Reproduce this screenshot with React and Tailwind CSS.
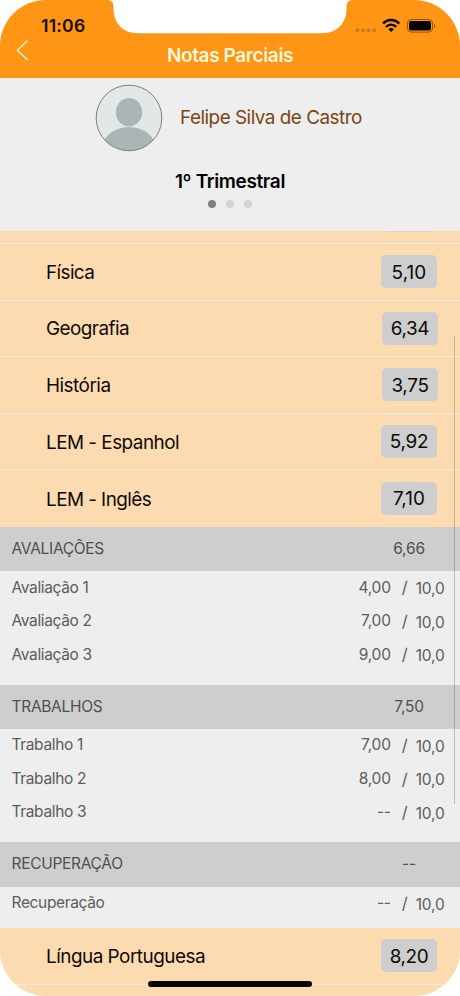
import React from 'react'

const subjects = [
  { name: "Física", grade: "5,10", nameClass: "tracking-[-0.6px]", gradeClass: "mr-[23px] tracking-[0.1px]" },
  { name: "Geografia", grade: "6,34", nameClass: "tracking-[-0.55px]", gradeClass: "mr-[22px] tracking-[-0.4px]" },
  { name: "História", grade: "3,75", nameClass: "tracking-[-0.5px]", gradeClass: "mr-[22px] tracking-[-0.3px]" },
  { name: "LEM - Espanhol", grade: "5,92", nameClass: "tracking-[-0.52px]", gradeClass: "mr-[23px] tracking-[-0.3px]" },
  { name: "LEM - Inglês", grade: "7,10", nameClass: "tracking-[-0.55px]", gradeClass: "mr-[23px] tracking-[0.1px]", last: true },
]

const groups = [
  {
    title: "AVALIAÇÕES",
    total: "6,66",
    height: "h-[113.5px]",
    items: [
      { name: "Avaliação 1", grade: "4,00" },
      { name: "Avaliação 2", grade: "7,00" },
      { name: "Avaliação 3", grade: "9,00" },
    ],
  },
  {
    title: "TRABALHOS",
    total: "7,50",
    height: "h-[113.5px]",
    items: [
      { name: "Trabalho 1", grade: "7,00" },
      { name: "Trabalho 2", grade: "8,00" },
      { name: "Trabalho 3", grade: "--" },
    ],
  },
  {
    title: "RECUPERAÇÃO",
    total: "--",
    height: "h-[41.5px]",
    items: [{ name: "Recuperação", grade: "--" }],
  },
]

const Notch = () => {
  return (
    <svg className="absolute top-0 left-0" width="460" height="34" viewBox="0 0 460 34" fill="#fff">
      <path d="M107 0 C111 0 113.5 2 113.5 7 L113.5 9 C113.5 23 123 33.2 138 33.2 L322 33.2 C337 33.2 346.5 23 346.5 9 L346.5 7 C346.5 2 349 0 353 0 Z" />
    </svg>
  )
}

const StatusIcons = () => {
  return (
    <svg width="82" height="20" viewBox="0 0 82 20">
      <g fill="#cb7a17">
        <rect x="1.6" y="12.4" width="3.6" height="3.6" rx="1" />
        <rect x="7.2" y="12.4" width="3.6" height="3.6" rx="1" />
        <rect x="12.8" y="12.4" width="3.6" height="3.6" rx="1" />
        <rect x="18.4" y="12.4" width="3.6" height="3.6" rx="1" />
      </g>
      <g fill="none" stroke="#0a0500" strokeWidth="2.4">
        <path d="M29.1 7.6 C33.4 2.8 40.8 2.8 45.1 7.6" />
        <path d="M32 10.9 C34.9 7.8 39.3 7.8 42.2 10.9" />
      </g>
      <path d="M34.3 13.2 C35.9 11.7 38.3 11.7 39.9 13.2 L37.1 16.1 Z" fill="#0a0500" />
      <rect x="53.5" y="3.5" width="25" height="12.6" rx="3.6" fill="none" stroke="#8f570f" strokeWidth="1" />
      <rect x="55" y="5" width="22" height="9.6" rx="2" fill="#050300" />
      <path d="M80 7.8 C81.6 8.3 81.6 11.5 80 12 Z" fill="#8f570f" />
    </svg>
  )
}

const Header = () => {
  return (
    <header className="relative h-[78px] bg-[#fe9514]">
      <Notch />
      <div className="relative flex justify-between h-[34px] pt-[15.5px] pl-[41px] pr-[24px]">
        <span className="text-[17.6px] leading-[20px] font-semibold tracking-[0.2px] text-[#1a0d00]">11:06</span>
        <StatusIcons />
      </div>
      <div className="relative flex h-[44px] items-center justify-center">
        <svg className="absolute left-[15px] top-[5px]" width="16" height="24" viewBox="0 0 16 24" fill="none" stroke="#fff3d6" strokeWidth="1.4">
          <path d="M12.5 1.5 L2.5 11.3 L12.5 21" />
        </svg>
        <h1 className="text-[19px] leading-[22px] font-semibold tracking-[-0.38px] text-[#fff7dc]">Notas Parciais</h1>
      </div>
    </header>
  )
}

const Profile = () => {
  return (
    <section className="h-[153px] bg-[#eeeeee]">
      <div className="flex items-center pl-[95px] pt-[6px]">
        <svg width="68" height="68" viewBox="0 0 68 68">
          <defs>
            <clipPath id="avatar">
              <circle cx="34" cy="34" r="32.7" />
            </clipPath>
          </defs>
          <circle cx="34" cy="34" r="33" fill="#e2e8e8" />
          <g fill="#abb5b6" clipPath="url(#avatar)">
            <ellipse cx="34" cy="28.2" rx="13.2" ry="14.2" />
            <ellipse cx="34" cy="66" rx="27.5" ry="23" />
          </g>
          <circle cx="34" cy="34" r="32.8" fill="none" stroke="#7d7f80" strokeWidth="1" />
        </svg>
        <span className="ml-[17px] text-[18.9px] leading-[24px] tracking-[-0.5px] text-[#7b4511]">Felipe Silva de Castro</span>
      </div>
      <h2 className="mt-[17.5px] text-center text-[19px] leading-[24px] font-semibold tracking-[-0.35px] text-black">1º Trimestral</h2>
      <div className="mt-[6.5px] flex justify-center gap-[10px]">
        <span className="size-2 rounded-full bg-[#808080]"></span>
        <span className="size-2 rounded-full bg-[#d4d4d4]"></span>
        <span className="size-2 rounded-full bg-[#d4d4d4]"></span>
      </div>
    </section>
  )
}

const SubjectRow = ({ name, grade, nameClass, gradeClass, last }) => {
  return (
    <div className={`flex h-[56.6px] items-center justify-between bg-[#fddbb0] pl-[46px] ${last ? "" : "border-b border-[#f2ebe3]"}`}>
      <span className={`pt-[2px] text-[18.9px] leading-[24px] text-[#0d0a06] ${nameClass}`}>{name}</span>
      <span className={`flex h-[33px] w-[56px] items-center justify-center rounded-[5px] bg-[#cecece] pt-[2px] text-[18.9px] text-[#0a0a0a] ${gradeClass}`}>{grade}</span>
    </div>
  )
}

const Group = ({ title, total, height, items }) => {
  return (
    <div>
      <div className="flex h-[44.2px] items-center justify-between bg-[#cecece] pl-[11.5px] pr-[11px] pb-px text-[15.5px] tracking-[-0.3px] text-[#505050]">
        <span>{title}</span>
        <span className="w-[80px] text-center tracking-[-0.2px]">{total}</span>
      </div>
      <ul className={`bg-[#eeeeee] text-[15.5px] tracking-[-0.2px] text-[#5c5c5c] ${height}`}>
        {items.map((item) => (
          <li key={item.name} className="flex h-[33.4px] items-center pl-[11.5px] pr-[15.5px] pb-px">
            <span className="flex-1 tracking-[-0.35px]">{item.name}</span>
            <span>{item.grade}</span>
            <span className="ml-[11px] pt-px text-[16.5px]">/</span>
            <span className="w-[37px] pt-[3px] text-right">10,0</span>
          </li>
        ))}
      </ul>
    </div>
  )
}

const App = () => {
  return (
    <div className="relative h-[996px] w-[460px] overflow-hidden rounded-[46px] bg-[#fddbb0] font-['Inter',sans-serif]">
      <Header />
      <Profile />
      <main>
        <div className="flex h-[13px] justify-end border-b border-[#f2ebe3] bg-[#fddbb0] pr-[28px]">
          <span className="h-px w-[46px] bg-[#d9d5cd]"></span>
        </div>
        {subjects.map((s) => (
          <SubjectRow key={s.name} {...s} />
        ))}
        {groups.map((g) => (
          <Group key={g.title} {...g} />
        ))}
        <SubjectRow name="Língua Portuguesa" grade="8,20" nameClass="tracking-[-0.5px]" gradeClass="mr-[23px] tracking-[-0.4px]" />
      </main>

      {/* scroll indicator */}
      <div className="absolute right-[5px] top-[336px] h-[468px] w-px bg-black/20"></div>
      {/* home indicator */}
      <div className="absolute bottom-[9px] left-[148px] h-[6px] w-[164px] rounded-full bg-[#060400]"></div>
    </div>
  )
}

export default App
